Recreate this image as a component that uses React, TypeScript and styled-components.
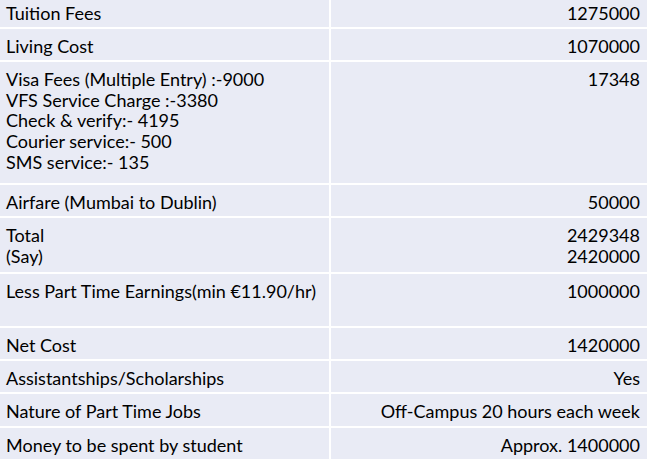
import styled, { createGlobalStyle } from 'styled-components'

const GlobalStyle = createGlobalStyle`
  html, body {
    margin: 0;
    padding: 0;
    background: #ffffff;
    overflow: hidden;
  }
`

const Table = styled.div`
  display: grid;
  grid-template-columns: 329px 1fr;
  gap: 2px;
  width: 647px;
  margin-top: -4px;
  background: #ffffff;
  font-family: Lato, 'Liberation Sans', sans-serif;
  font-size: 18px;
  line-height: 20.7px;
  color: #000000;
`

const Cell = styled.div<{ $extra?: number; $right?: boolean }>`
  background: #e9ebf5;
  padding: 6.8px ${(p) => (p.$right ? '7px' : '6px')} ${(p) => 3.5 + (p.$extra ?? 0)}px 6px;
  text-align: ${(p) => (p.$right ? 'right' : 'left')};
  white-space: nowrap;
`

const Line = styled.div`
  min-height: 20.7px;
`

type Row = { label: string[]; value: string[]; extra?: number }

const rows: Row[] = [
  { label: ['Tuition Fees'], value: ['1275000'] },
  { label: ['Living Cost'], value: ['1070000'] },
  {
    label: [
      'Visa Fees (Multiple Entry) :-9000',
      'VFS Service Charge :-3380',
      'Check & verify:- 4195',
      'Courier service:- 500',
      'SMS service:- 135',
    ],
    value: ['17348'],
    extra: 7.2,
  },
  { label: ['Airfare (Mumbai to Dublin)'], value: ['50000'] },
  { label: ['Total', '(Say)'], value: ['2429348', '2420000'], extra: 2.3 },
  { label: ['Less Part Time Earnings(min €11.90/hr)', ''], value: ['1000000'], extra: 0.3 },
  { label: ['Net Cost'], value: ['1420000'] },
  { label: ['Assistantships/Scholarships'], value: ['Yes'] },
  { label: ['Nature of Part Time Jobs'], value: ['Off-Campus 20 hours each week'], extra: 1 },
  { label: ['Money to be spent by student'], value: ['Approx. 1400000'] },
]

export default function App() {
  return (
    <>
      <GlobalStyle />
      <Table>
        {rows.map((r, i) => (
          <>
            <Cell key={`l${i}`} $extra={r.extra}>
              {r.label.map((t, j) => (
                <Line key={j}>{t}</Line>
              ))}
            </Cell>
            <Cell key={`v${i}`} $extra={r.extra} $right>
              {r.value.map((t, j) => (
                <Line key={j}>{t}</Line>
              ))}
            </Cell>
          </>
        ))}
      </Table>
    </>
  )
}
